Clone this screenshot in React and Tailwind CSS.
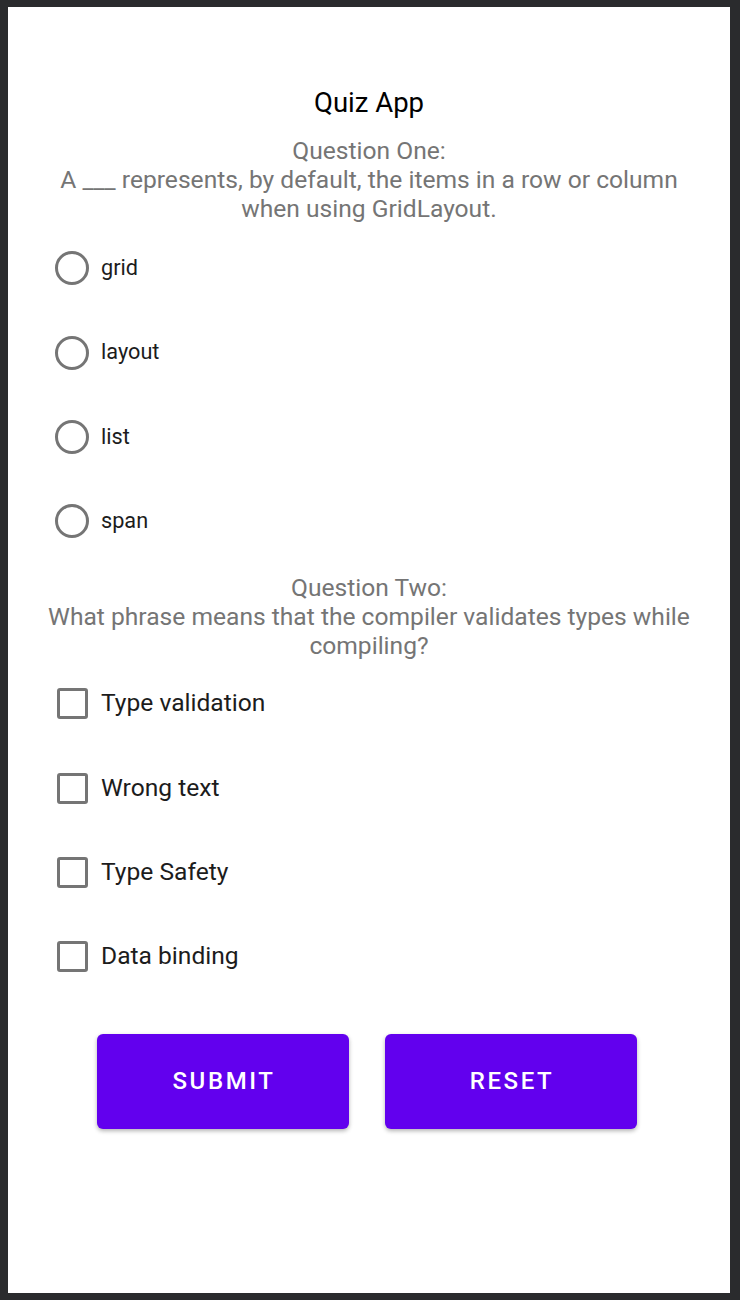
const font = { fontFamily: 'Roboto, "Noto Sans", sans-serif' };

const radioOptions = ['grid', 'layout', 'list', 'span'];
const checkOptions = ['Type validation', 'Wrong text', 'Type Safety', 'Data binding'];

function RadioRow({ label }) {
  return (
    <div className="flex h-[84.4px] items-center pl-[47px]">
      <span className="box-border h-[34px] w-[34px] rounded-full border-[3px] border-[#757575]" />
      <span className="ml-[12px] text-[21.7px] text-[#1c1c1c]">{label}</span>
    </div>
  );
}

function CheckRow({ label }) {
  return (
    <div className="flex h-[84.3px] items-center pl-[49px]">
      <span className="box-border h-[31px] w-[31px] rounded-[3px] border-[3px] border-[#757575]" />
      <span className="ml-[13px] text-[24.6px] text-[#1c1c1c]">{label}</span>
    </div>
  );
}

export default function App() {
  return (
    <div className="box-border h-[1300px] w-[740px] bg-[#2a2b2d] pb-[7px] pl-[8px] pr-[10px] pt-[7px]" style={font}>
      <div className="flex h-full flex-col bg-white">
        <div className="pt-[82px] text-center text-[27.5px] leading-[28px] text-black">Quiz App</div>

        <div className="mt-[19px] px-[40px] text-center text-[24.6px] leading-[29px] text-[#757575]">
          Question One:
          <br />
          A ___ represents, by default, the items in a row or column when using GridLayout.
        </div>

        <div className="mt-[3px]">
          {radioOptions.map((o) => (
            <RadioRow key={o} label={o} />
          ))}
        </div>

        <div className="mt-[9px] px-[30px] text-center text-[24.6px] leading-[29px] text-[#757575]">
          Question Two:
          <br />
          What phrase means that the compiler validates types while compiling?
        </div>

        <div className="mt-[2px]">
          {checkOptions.map((o) => (
            <CheckRow key={o} label={o} />
          ))}
        </div>

        <div className="mt-[35px] flex justify-center gap-[36px] pr-[4px]">
          {['SUBMIT', 'RESET'].map((b) => (
            <button
              key={b}
              type="button"
              className="h-[95px] w-[252px] rounded-[6px] bg-[#6200ee] pl-[2px] text-[24px] font-medium tracking-[2.6px] text-white shadow-[0_2px_4px_rgba(0,0,0,0.3)]"
            >
              {b}
            </button>
          ))}
        </div>
      </div>
    </div>
  );
}
